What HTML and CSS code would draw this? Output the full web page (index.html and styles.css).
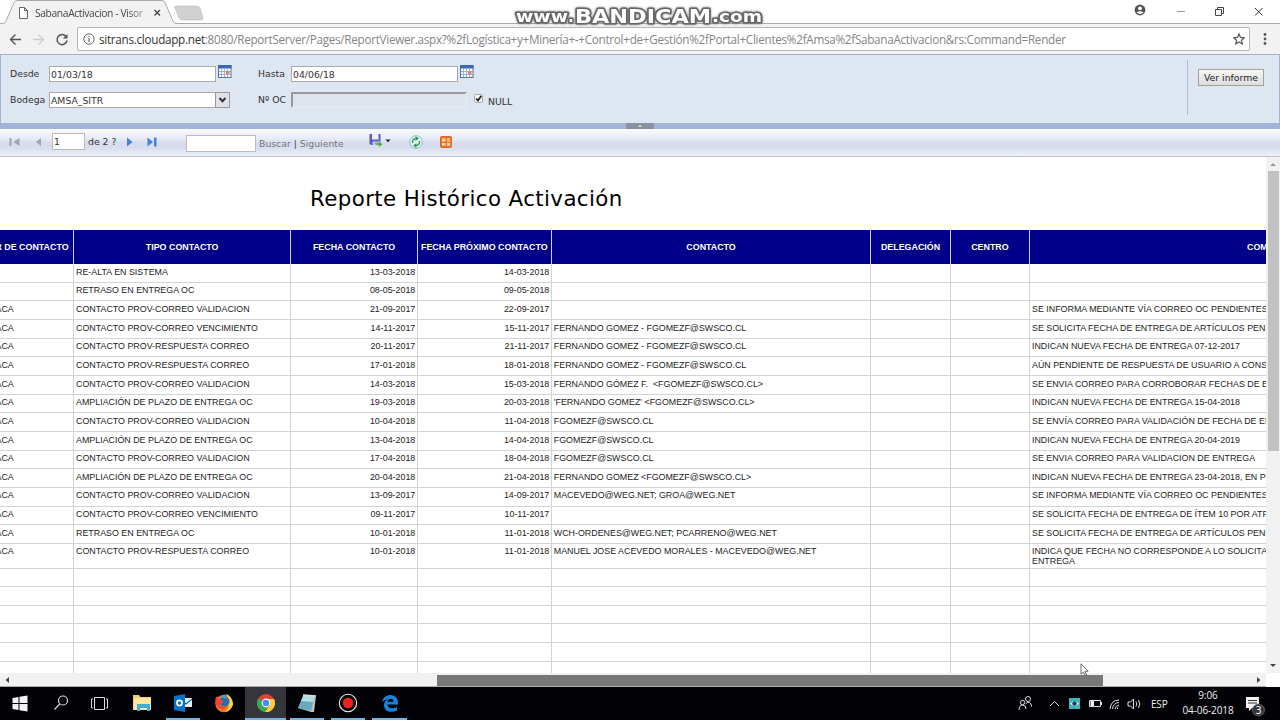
FILE: index.html
```html
<!DOCTYPE html>
<html lang="es">
<head>
<meta charset="utf-8">
<title>SabanaActivacion - Visor</title>
<link rel="stylesheet" href="styles.css">
</head>
<body>
<div class="screen">
  <header class="tabstrip">
    <svg class="tabshape" width="206" height="24" viewBox="0 0 206 24"><path d="M0 23.500H3Q5 23.500 6 21L14 2.500Q15 .5 17 .5H162Q164 .5 165 2.500L173 21Q174 23.500 176 23.500H206V24H0z" fill="#f2f2f2"/><path d="M0 23.500H3Q5 23.500 6 21L14 2.500Q15 .5 17 .5H162Q164 .5 165 2.500L173 21Q174 23.500 176 23.500H206" fill="none" stroke="#aaa"/><path d="M176 6H197Q199 6 200 8L203 18Q203 20 201 20H182Q180 20 179 18L175 8Q174 6 176 6z" fill="#d1d1d1" stroke="#bbb" stroke-width=".6"/><path d="M19.500 7.500h5l3 3v8h-8zM24.500 7.500v3h3" fill="#fff" stroke="#666"/><path d="M154.500 10l5.500 5.500M160 10l-5.500 5.500" stroke="#444" stroke-width="1.300"/></svg>
    <span class="tabtitle">SabanaActivacion - Visor</span>
    <svg class="watermark" width="256" height="24" viewBox="0 0 256 24"><g class="wm"><text x="5" y="17" font-size="15" textLength="52" lengthAdjust="spacingAndGlyphs">www</text><text x="57" y="17" font-size="15">.</text><text x="64" y="18" font-size="20" textLength="136" lengthAdjust="spacingAndGlyphs">BANDICAM</text><text x="201" y="17" font-size="15" textLength="50" lengthAdjust="spacingAndGlyphs">.com</text></g></svg>
    <svg class="winctl" width="150" height="24" viewBox="0 0 150 24"><circle cx="10" cy="10" r="5.400" fill="#555"/><circle cx="10" cy="8.300" r="1.900" fill="#fff"/><path d="M6.500 12.500q3.500-2.400 7 0q-3 2.800-7 0" fill="#fff"/><path d="M47 11.500h8" stroke="#999"/><path d="M85.500 9.500h6v6h-6zM87.500 9.500v-2h6v6h-2" fill="none" stroke="#444"/><path d="M125 8l7.500 7.500M132.500 8L125 15.500" stroke="#333"/></svg>
  </header>

  <nav class="addressbar">
    <svg width="70" height="30" viewBox="0 0 70 30"><path d="M21 15.500H10.500M15.500 10.500l-5 5l5 5" fill="none" stroke="#555" stroke-width="1.400"/><path d="M33 15.500h10.500M38.500 10.500l5 5l-5 5" fill="none" stroke="#ccc" stroke-width="1.300"/><path d="M66 12.500a5 5 0 1 0 1 4" fill="none" stroke="#555" stroke-width="1.500"/><path d="M67.500 10v4.500H63z" fill="#555"/></svg>
    <div class="omnibox">
      <svg width="12" height="12" viewBox="0 0 12 12"><circle cx="6" cy="6" r="5.200" fill="none" stroke="#666"/><path d="M6 5v4M6 2.800v1.200" stroke="#666" stroke-width="1.200"/></svg>
      <span class="url"><b>sitrans.cloudapp.net</b>:8080/ReportServer/Pages/ReportViewer.aspx?%2fLogística+y+Minería+-+Control+de+Gestión%2fPortal+Clientes%2fAmsa%2fSabanaActivacion&amp;rs:Command=Render</span>
      <svg width="12" height="12" viewBox="0 0 12 12"><path d="M6 .9l1.500 3.500 3.800.3-2.900 2.500.9 3.700L6 8.900 2.700 10.900l.9-3.700L.7 4.700l3.800-.3z" fill="none" stroke="#555" stroke-width="1.200"/></svg>
    </div>
    <svg class="dots" width="6" height="14" viewBox="0 0 6 14"><g fill="#555"><circle cx="3" cy="2.500" r="1.400"/><circle cx="3" cy="7" r="1.400"/><circle cx="3" cy="11.500" r="1.400"/></g></svg>
  </nav>

  <section class="params">
    <div class="fields">
      <label>Desde</label><div class="box">01/03/18</div>
      <svg class="cal" width="14" height="13" viewBox="0 0 14 13"><rect x=".5" y=".5" width="12.500" height="12" fill="#f7faff" stroke="#5674a8"/><path d="M0 0h13.500v3.500H0z" fill="#3f67ae"/><path d="M3.500 4v8M6.500 4v8M9.500 4v8M1 6.500h12M1 9.500h12" stroke="#8ba3cc" stroke-width=".8"/><path d="M8 6h3.500v3H8z" fill="#dc8565"/></svg>
      <label>Hasta</label><div class="box">04/06/18</div>
      <svg class="cal second" width="14" height="13" viewBox="0 0 14 13"><rect x=".5" y=".5" width="12.500" height="12" fill="#f7faff" stroke="#5674a8"/><path d="M0 0h13.500v3.500H0z" fill="#3f67ae"/><path d="M3.500 4v8M6.500 4v8M9.500 4v8M1 6.500h12M1 9.500h12" stroke="#8ba3cc" stroke-width=".8"/><path d="M8 6h3.500v3H8z" fill="#dc8565"/></svg>
      <label>Bodega</label><div class="box select">AMSA_SITR<svg width="15" height="16" viewBox="0 0 15 16"><rect x=".5" y=".5" width="14" height="15" fill="#e0e0e8" stroke="#999"/><path d="M4.500 6l3 3.200L10.500 6" fill="none" stroke="#333" stroke-width="2"/></svg></div><i></i>
      <label>Nº OC</label><div class="box disabled"></div>
      <div class="null"><svg width="10" height="10" viewBox="0 0 10 10"><rect x=".5" y=".5" width="8" height="8" rx="1" fill="#f4f4f4" stroke="#aaa"/><path d="M2.200 4.500L4 6.600L7.300 1.800" fill="none" stroke="#222" stroke-width="1.700"/></svg><span>NULL</span></div>
    </div>
    <div class="submit"><button class="view">Ver informe</button></div>
  </section>
  <div class="splitter"><span><svg width="28" height="5" viewBox="0 0 28 5"><path d="M12 4L14 1.500L16 4z" fill="#ddd"/></svg></span></div>

  <section class="tools">
    <svg class="prev" width="34" height="12" viewBox="0 0 34 12"><path d="M.5 2h2v8h-2zM10.500 2v8L4.500 6zM32 2v8L27 6z" fill="#a3a3ab"/></svg>
    <div class="page">1</div><span class="of">de 2 ?</span>
    <svg class="next" width="33" height="12" viewBox="0 0 33 12"><path d="M1 1.500L6.500 6L1 10.500zM21.500 1.500L27 6L21.500 10.500zM28 1.500h2.500v9H28z" fill="#4780dd"/></svg>
    <div class="find"></div><span class="links">Buscar <em>|</em> Siguiente</span>
    <svg class="actions" width="86" height="18" viewBox="0 0 86 18"><path d="M.5 1h11v11H2L.5 10.500z" fill="#5c5cb8"/><path d="M3 1h6.500v5.500H3z" fill="#eeeef8"/><path d="M3.500 8.500h5V12h-5z" fill="#c5c5e1"/><path d="M5.500 8.500q1 2 4 1.500V7.700l4.300 3.600L9.500 14.500v-2.200q-4 .5-4-3.800z" fill="#49aa50" stroke="#d6efd6" stroke-width=".5"/><path d="M16.500 6.500h5L19 9.300z" fill="#222"/><circle cx="47" cy="9" r="6.300" fill="#eef8fb" stroke="#7fb7d6"/><path d="M43.600 10a3.600 3.600 0 0 1 3.200-4.600M50.400 8a3.600 3.600 0 0 1-3.200 4.600" fill="none" stroke="#2c9c4a" stroke-width="1.500"/><path d="M46.500 3l3.500 2.400-3.500 2.500zM47.500 15l-3.500-2.400 3.500-2.500z" fill="#2c9c4a"/><rect x="71.500" y="3.500" width="11" height="11" rx="1" fill="#e87524" stroke="#d26a28"/><path d="M73 5.500h3.500v3H73zM78 5.500h3.200v1.200H78zM78 7.500h3.200v1.200H78zM73 10h3.500v2.800H73zM78 10h3.200v2.800H78z" fill="#ffd4a4"/></svg>
  </section>

  <main class="viewer">
    <div class="report">
      <h1>Reporte Histórico Activación</h1>
      <div class="grid">
        <div class="row head"><span>R DE CONTACTO</span><span>TIPO CONTACTO</span><span>FECHA CONTACTO</span><span>FECHA PRÓXIMO CONTACTO</span><span>CONTACTO</span><span>DELEGACIÓN</span><span>CENTRO</span><span>COMENTARIO</span></div>
        <div class="row"><span></span><span>RE-ALTA EN SISTEMA</span><span>13-03-2018</span><span>14-03-2018</span><span></span><span></span><span></span><span></span></div>
        <div class="row"><span></span><span>RETRASO EN ENTREGA OC</span><span>08-05-2018</span><span>09-05-2018</span><span></span><span></span><span></span><span></span></div>
        <div class="row"><span>ACA</span><span>CONTACTO PROV-CORREO VALIDACION</span><span>21-09-2017</span><span>22-09-2017</span><span></span><span></span><span></span><span>SE INFORMA MEDIANTE VÍA CORREO OC PENDIENTES</span></div>
        <div class="row"><span>ACA</span><span>CONTACTO PROV-CORREO VENCIMIENTO</span><span>14-11-2017</span><span>15-11-2017</span><span>FERNANDO GOMEZ - FGOMEZF@SWSCO.CL</span><span></span><span></span><span>SE SOLICITA FECHA DE ENTREGA DE ARTÍCULOS PENDIENTES</span></div>
        <div class="row"><span>ACA</span><span>CONTACTO PROV-RESPUESTA CORREO</span><span>20-11-2017</span><span>21-11-2017</span><span>FERNANDO GOMEZ - FGOMEZF@SWSCO.CL</span><span></span><span></span><span>INDICAN NUEVA FECHA DE ENTREGA 07-12-2017</span></div>
        <div class="row"><span>ACA</span><span>CONTACTO PROV-RESPUESTA CORREO</span><span>17-01-2018</span><span>18-01-2018</span><span>FERNANDO GOMEZ - FGOMEZF@SWSCO.CL</span><span></span><span></span><span>AÚN PENDIENTE DE RESPUESTA DE USUARIO A CONSULTA</span></div>
        <div class="row"><span>ACA</span><span>CONTACTO PROV-CORREO VALIDACION</span><span>14-03-2018</span><span>15-03-2018</span><span>FERNANDO GÓMEZ F. &nbsp;&lt;FGOMEZF@SWSCO.CL&gt;</span><span></span><span></span><span>SE ENVIA CORREO PARA CORROBORAR FECHAS DE ENTREGA</span></div>
        <div class="row"><span>ACA</span><span>AMPLIACIÓN DE PLAZO DE ENTREGA OC</span><span>19-03-2018</span><span>20-03-2018</span><span>'FERNANDO GOMEZ' &lt;FGOMEZF@SWSCO.CL&gt;</span><span></span><span></span><span>INDICAN NUEVA FECHA DE ENTREGA 15-04-2018</span></div>
        <div class="row"><span>ACA</span><span>CONTACTO PROV-CORREO VALIDACION</span><span>10-04-2018</span><span>11-04-2018</span><span>FGOMEZF@SWSCO.CL</span><span></span><span></span><span>SE ENVÍA CORREO PARA VALIDACIÓN DE FECHA DE ENTREGA</span></div>
        <div class="row"><span>ACA</span><span>AMPLIACIÓN DE PLAZO DE ENTREGA OC</span><span>13-04-2018</span><span>14-04-2018</span><span>FGOMEZF@SWSCO.CL</span><span></span><span></span><span>INDICAN NUEVA FECHA DE ENTREGA 20-04-2019</span></div>
        <div class="row"><span>ACA</span><span>CONTACTO PROV-CORREO VALIDACION</span><span>17-04-2018</span><span>18-04-2018</span><span>FGOMEZF@SWSCO.CL</span><span></span><span></span><span>SE ENVIA CORREO PARA VALIDACION DE ENTREGA</span></div>
        <div class="row"><span>ACA</span><span>AMPLIACIÓN DE PLAZO DE ENTREGA OC</span><span>20-04-2018</span><span>21-04-2018</span><span>FERNANDO GOMEZ &lt;FGOMEZF@SWSCO.CL&gt;</span><span></span><span></span><span>INDICAN NUEVA FECHA DE ENTREGA 23-04-2018, EN PROCESO</span></div>
        <div class="row"><span>ACA</span><span>CONTACTO PROV-CORREO VALIDACION</span><span>13-09-2017</span><span>14-09-2017</span><span>MACEVEDO@WEG.NET; GROA@WEG.NET</span><span></span><span></span><span>SE INFORMA MEDIANTE VÍA CORREO OC PENDIENTES</span></div>
        <div class="row"><span>ACA</span><span>CONTACTO PROV-CORREO VENCIMIENTO</span><span>09-11-2017</span><span>10-11-2017</span><span></span><span></span><span></span><span>SE SOLICITA FECHA DE ENTREGA DE ÍTEM 10 POR ATRASO</span></div>
        <div class="row"><span>ACA</span><span>RETRASO EN ENTREGA OC</span><span>10-01-2018</span><span>11-01-2018</span><span>WCH-ORDENES@WEG.NET; PCARRENO@WEG.NET</span><span></span><span></span><span>SE SOLICITA FECHA DE ENTREGA DE ARTÍCULOS PENDIENTES</span></div>
        <div class="row tall"><span>ACA</span><span>CONTACTO PROV-RESPUESTA CORREO</span><span>10-01-2018</span><span>11-01-2018</span><span>MANUEL JOSE ACEVEDO MORALES - MACEVEDO@WEG.NET</span><span></span><span></span><span>INDICA QUE FECHA NO CORRESPONDE A LO SOLICITADO<br>ENTREGA</span></div>
        <div class="row"><span></span><span></span><span></span><span></span><span></span><span></span><span></span><span></span></div>
        <div class="row"><span></span><span></span><span></span><span></span><span></span><span></span><span></span><span></span></div>
        <div class="row"><span></span><span></span><span></span><span></span><span></span><span></span><span></span><span></span></div>
        <div class="row"><span></span><span></span><span></span><span></span><span></span><span></span><span></span><span></span></div>
        <div class="row"><span></span><span></span><span></span><span></span><span></span><span></span><span></span><span></span></div>
        <div class="row"><span></span><span></span><span></span><span></span><span></span><span></span><span></span><span></span></div>
      </div>
    </div>
    <div class="vscroll"><svg width="14" height="13" viewBox="0 0 14 13"><path d="M4 9h6L7 6z" fill="#999"/></svg><div class="vthumb"></div><svg width="14" height="13" viewBox="0 0 14 13"><path d="M4 4h6L7 7z" fill="#444"/></svg></div>
  </main>
  <div class="hscroll"><svg width="14" height="13" viewBox="0 0 14 13"><path d="M9 4v6L5.500 7z" fill="#444"/></svg><div class="hthumb"></div><svg width="14" height="13" viewBox="0 0 14 13"><path d="M5 4v6L8.500 7z" fill="#444"/></svg></div>

  <footer class="taskbar">
    <div class="task"><svg viewBox="0 0 32 32"><path d="M5 11l6-1v6H5zM12 9.800l8-1.300V16h-8zM5 17h6v6l-6-1zM12 17h8v7.500l-8-1.300z" fill="#f2f2f2" transform="translate(3.500 0)"/></svg></div>
    <div class="task"><svg viewBox="0 0 32 32"><circle cx="18" cy="13.500" r="4.500" fill="none" stroke="#ddd" stroke-width="1.200"/><path d="M14.700 16.800L9.500 22.500" stroke="#ddd" stroke-width="1.200"/></svg></div>
    <div class="task"><svg viewBox="0 0 32 32"><path d="M9.500 10.500h10v12h-10zM8 12h-1.500v9H8M21 12h1.500v9H21" fill="none" stroke="#ddd"/></svg></div>
    <div class="task"><svg viewBox="0 0 32 32"><path d="M7 8h6l1.500 2H25v13H7z" fill="#f0cd70"/><path d="M8 11h17v12H8z" fill="#ffe7a2"/><path d="M11 17h13v7h-3v-3h-7v3h-3z" fill="#43aed3"/></svg></div>
    <div class="task open"><svg viewBox="0 0 32 32"><path d="M15 11h10v9H15z" fill="#e4f0fa"/><path d="M16 14l3 3 6-5" fill="none" stroke="#0b68b4" stroke-width="1.200"/><path d="M7 9l11-2v18L7 23z" fill="#0873c8"/><circle cx="12.500" cy="16" r="2.600" fill="none" stroke="#fff" stroke-width="1.600"/></svg></div>
    <div class="task"><svg viewBox="0 0 32 32"><circle cx="16" cy="16.500" r="8.700" fill="#f3742a"/><path d="M18 6.500q7 4 7 11-2 6-8 7.500 7-6 1-18.500" fill="#ffd43b"/><circle cx="16.500" cy="14.500" r="5" fill="#2b6db5"/><path d="M7.500 11l2-2 1 3 5 2-1 2-3 2q3 3 8 1-3 5-9 2Q6.500 17 7.500 11" fill="#ef4733"/><path d="M12.500 10q2-3 6-2-2 2 1 4z" fill="#43a8dc"/></svg></div>
    <div class="task open active"><svg viewBox="0 0 32 32"><circle cx="16" cy="16" r="9" fill="#dc4437"/><path d="M16 16L8.200 11.500A9 9 0 0 0 15 25L19 18z" fill="#37a853"/><path d="M16 12h8A9 9 0 0 1 15 25l5-7z" fill="#fbce3c"/><circle cx="16" cy="16" r="4.400" fill="#fff"/><circle cx="16" cy="16" r="3.300" fill="#4d89ed"/></svg></div>
    <div class="task open"><svg viewBox="0 0 32 32"><path d="M13 8l12 1-2 16-3 0-13-4z" fill="#bfc3bb"/><path d="M12.500 8l11 1-3.500 15-13-3z" fill="#6aa9ba"/><path d="M12.500 8l11 1-1.500 6-12-1z" fill="#b4dfe5"/><path d="M12 8l13 1" stroke="#ddd" stroke-width="1.300"/></svg></div>
    <div class="task open"><svg viewBox="0 0 32 32"><circle cx="16" cy="16" r="8.700" fill="#090909" stroke="#eee" stroke-width="1.100"/><circle cx="16" cy="16" r="5.200" fill="#ee2020"/></svg></div>
    <div class="task open"><svg viewBox="0 0 32 32"><path d="M8 15c1-5 5-7 8.500-7 5 0 8 4 7.500 9.500H13.500c.5 4 5 5 9.500 2.500v3.500c-6 3-13 1-13-5.500 0-3 2-5 4-5.800-2.500.3-4.500 1.300-6 2.800zm5.500-.2h6c0-4-5-4.200-6 0z" fill="#1683dc"/></svg></div>
    <svg class="tray" width="128" height="33" viewBox="0 0 128 33"><g fill="none" stroke="#ddd"><circle cx="13" cy="12" r="2.500"/><circle cx="7.500" cy="15.500" r="2.200"/><path d="M4 23q0-5 3.500-5t3.500 4M10.500 17q2-2.500 4-1.500t2 4M35 19l4.500-4.500L44 19"/><path d="M74.500 13.500h11v6h-11zM86.500 15v3"/><path d="M95 22q1-9 9-9M97.500 22q.5-6 6.500-6.500M100 22q.5-3.500 4-4M102.500 22v-1.500"/><path d="M113 15h2.500l3-3v10l-3-3H113zM121 14.500q1.500 2.500 0 5M123.500 13q2.500 4 0 8"/></g><path d="M75.500 14h3.500v5h-3.500z" fill="#eee"/><rect x="54" y="11" width="11" height="11" fill="#39b7ba"/><path d="M55 16.500q4.500-5 9 0-4.500 5-9 0" fill="#ddf"/><circle cx="59.500" cy="16.500" r="2.200" fill="#164a58"/></svg>
    <span class="lang">ESP</span>
    <div class="clock"><span>9:06</span><span>04-06-2018</span></div>
    <svg class="note" width="24" height="26" viewBox="0 0 24 26"><path d="M2 5h13v11H8l-3 3v-3H2z" fill="#f2f2f2"/><path d="M4 8.500h9M4 11h9" stroke="#333"/><circle cx="14.500" cy="18" r="6" fill="#343438" stroke="#777" stroke-width=".7"/><text x="14.500" y="21.500" font-size="10" text-anchor="middle" fill="#fff" font-family="Noto Sans">3</text></svg>
  </footer>
  <svg class="cursor" width="10" height="14" viewBox="0 0 10 14"><path d="M1 .8v10.400l2.400-2.200 1.700 3.600 1.500-.7-1.600-3.500 3.200-.2z" fill="#fff" stroke="#444" stroke-width=".8"/></svg>
</div>
</body>
</html>
```
FILE: styles.css
```css
* { box-sizing: border-box; }
body { margin: 0; width: 1280px; height: 720px; overflow: hidden; background: #fff; }
svg { flex: none; display: block; }
.screen { position: relative; width: 1280px; height: 720px; display: flex; flex-direction: column; overflow: hidden; }

.tabstrip { position: relative; flex: none; height: 24px; border-bottom: 1px solid #aaa; display: flex; }
.tabshape { margin-bottom: -1px; }
.tabtitle { position: absolute; left: 35px; top: 5px; width: 112px; overflow: hidden; font: 10.3px/16px "Open Sans", sans-serif; letter-spacing: -.38px; white-space: nowrap; color: #444; -webkit-mask-image: linear-gradient(90deg, #000 82%, rgba(0, 0, 0, .3)); mask-image: linear-gradient(90deg, #000 82%, rgba(0, 0, 0, .3)); }
.watermark { position: absolute; left: 511px; top: 5px; z-index: 2; }
.wm { font-family: "DejaVu Sans", sans-serif; font-weight: bold; fill: #fff; stroke: #666; stroke-width: 3px; paint-order: stroke; stroke-linejoin: round; filter: drop-shadow(0 0 1px #666); }
.winctl { margin-left: auto; }

.addressbar { flex: none; height: 30px; background: #f2f2f2; display: flex; align-items: center; }
.omnibox { margin-left: 7px; width: 1173px; height: 24px; border: 1px solid #b5b5b5; border-radius: 2px; background: #fff; display: flex; align-items: center; padding: 0 4px 0 5px; }
.url { flex: 1; margin-left: 4px; font: 11.7px/20px "Open Sans", sans-serif; letter-spacing: -.28px; white-space: nowrap; color: #858585; }
.url b { font-weight: 400; color: #333; }
.dots { margin-left: 12px; }

.params { flex: none; height: 69px; background: #dee6f2; border: 1px solid #9eb2d4; border-bottom: 0; display: flex; font: 9.3px/16px "DejaVu Sans", sans-serif; color: #333; }
.fields { display: grid; grid-template-columns: 39px 168px 41px 33px 177px 60px; grid-template-rows: 16px 16px; row-gap: 10px; padding: 11px 0 0 9px; }
.fields label { white-space: nowrap; line-height: 16px; }
.box { width: 167px; height: 16px; border: 1px solid #aaa; background: #fff; line-height: 15px; padding-left: 1px; }
.cal { margin: -1px 0 0 1px; }
.second { margin-left: -8px; }
.select { width: 181px; display: flex; justify-content: space-between; }
.select svg { margin: -1px; }
.disabled { width: 176px; background: #dee4ed; border: 2px solid #999; border-right-color: #e6e9ef; border-bottom-color: #e6e9ef; }
.null { display: flex; gap: 4px; margin-left: 6px; }
.null svg { margin-top: 2px; }
.null span { padding-top: 2px; }
.submit { margin: 5px 15px 8px auto; border-left: 1px solid #aebdda; padding: 9px 0 0 10px; }
.view { display: block; width: 66px; height: 17px; padding: 0; font: 9.3px/14px "DejaVu Sans", sans-serif; color: #222; border: 1px solid #a0a0a0; background: linear-gradient(#f7f7f7, #ddd); }
.splitter { flex: none; height: 6px; background: #a4b4d8; display: flex; justify-content: center; }
.splitter span { width: 28px; background: #8b919e; }

.tools { flex: none; height: 28px; display: flex; padding: 0 0 0 9px; border-bottom: 1px solid #bfc0c7; background: linear-gradient(#fafbff, #e7ebf7 35%, #d6dcec 52%, #d9deed 70%, #eef1f8); font: 9.3px/14px "DejaVu Sans", sans-serif; color: #333; }
.prev { margin-top: 7px; }
.page { margin: 4px 0 0 9px; width: 33px; height: 17px; border: 1px solid #bbb; background: #fff; line-height: 16px; padding-left: 1px; }
.of { margin: 6px 0 0 3px; width: 38px; white-space: nowrap; }
.next { margin-top: 7px; }
.find { width: 70px; height: 17px; margin: 6px 0 0 27px; border: 1px solid #bbb; background: #fff; }
.links { margin: 8px 0 0 3px; width: 110px; color: #777; white-space: nowrap; }
.links em { color: #444; font-style: normal; }
.actions { margin-top: 4px; }

.viewer { flex: none; height: 516px; display: flex; overflow: hidden; }
.report { width: 1266px; overflow: hidden; }
.report h1 { margin: 0; padding: 26px 0 0 310px; height: 73px; font: 400 21.33px/32px "DejaVu Sans", sans-serif; letter-spacing: .4px; color: #000; white-space: nowrap; }
.row { display: grid; grid-template-columns: 74px 217.300px 126.500px 134px 319.500px 79.500px 79.200px 240px; height: 18.67px; font: 8.9px/10px "Liberation Sans", sans-serif; color: #222; }
.row > span { border-right: 1px solid #d3d3d3; border-bottom: 1px solid #d3d3d3; padding: 2.600px 2px 0; overflow: hidden; white-space: nowrap; }
.row > span:nth-child(1) { text-indent: -6.500px; }
.row > span:nth-child(3), .row > span:nth-child(4) { text-align: right; padding-right: 1.500px; }
.tall { height: 24.67px; }
.head { height: 34px; background: #00008b; color: #fff; font-weight: 700; }
.head > span:nth-child(n) { padding: 12px 0 0; text-align: center; border-bottom: 0; }
.head > span:nth-child(1) { text-indent: -9px; }
.head > span:nth-child(8) { text-align: left; padding-left: 217px; }
.vscroll { width: 14px; background: #f1f1f1; display: flex; flex-direction: column; }
.vthumb { width: 11px; height: 280px; margin: 1px 0 auto 2px; background: #c1c1c1; }
.hscroll { flex: none; width: 1266px; height: 14px; background: #f1f1f1; display: flex; border-bottom: 1px solid #aaa; }
.hthumb { margin: 2px auto 0 423px; width: 666px; height: 11px; background: #787878; }

.taskbar { flex: none; height: 33px; background: #030307; display: flex; color: #eee; font: 10px/16px "Open Sans", sans-serif; }
.task { width: 40.500px; margin-right: .8px; display: flex; justify-content: center; }
.task:nth-child(-n+3) { margin-right: 0; }
.task svg { width: 32px; height: 32px; }
.open { box-shadow: inset 3px 0 #030307, inset -3px 0 #030307, inset 0 -2px #76b4e4; }
.active { background: #35363b; box-shadow: inset 0 -2px #76b4e4; }
.tray { margin-left: auto; }
.lang { margin: 9px 0 0 8px; width: 20px; letter-spacing: -.2px; }
.clock { margin-left: 7px; width: 60px; display: flex; flex-direction: column; align-items: center; line-height: 15px; padding-top: 1px; letter-spacing: -.1px; white-space: nowrap; }
.note { margin: 5px 12px 0 6px; }
.cursor { position: absolute; left: 1080px; top: 663px; }
```
